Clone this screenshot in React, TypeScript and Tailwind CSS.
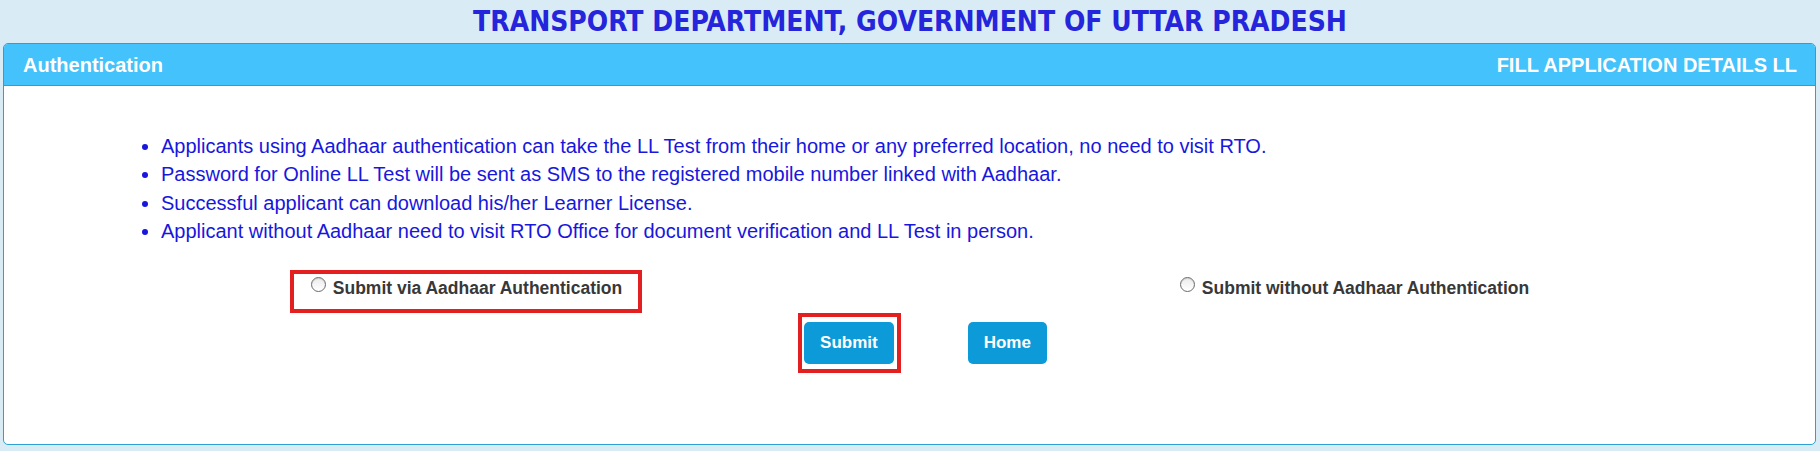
import React from "react";

const items = [
  "Applicants using Aadhaar authentication can take the LL Test from their home or any preferred location, no need to visit RTO.",
  "Password for Online LL Test will be sent as SMS to the registered mobile number linked with Aadhaar.",
  "Successful applicant can download his/her Learner License.",
  "Applicant without Aadhaar need to visit RTO Office for document verification and LL Test in person.",
];

function Radio() {
  return (
    <span className="mt-[-1px] w-[15px] h-[15px] shrink-0 rounded-full border border-[#6a6a6a] bg-gradient-to-b from-[#ececec] to-white shadow-[inset_0_1px_1px_rgba(0,0,0,0.12)]" />
  );
}

export default function App() {
  return (
    <div className="w-[1820px] h-[451px] overflow-hidden bg-[#d9ecf6] font-['Liberation_Sans',Arial,sans-serif]">
      <h1 className="h-[43px] flex items-center justify-center text-[28px] font-bold text-[#2525dc] font-['DejaVu_Sans_Condensed','DejaVu_Sans',sans-serif]">
        TRANSPORT DEPARTMENT, GOVERNMENT OF UTTAR PRADESH
      </h1>
      <div className="ml-[3px] mr-[4px] h-[402px] border border-[#2e9fd2] rounded-[5px] bg-white overflow-hidden">
        <div className="h-[42px] bg-[#43c2fb] border-b border-[#2e9fd2] flex items-center justify-between pl-[19px] pr-[18px] text-white font-bold text-[20px]">
          <span>Authentication</span>
          <span>FILL APPLICATION DETAILS LL</span>
        </div>
        <div className="pl-[18px] pr-[17px]">
          <ul className="mt-[46px] pl-[139px] list-disc text-[20px] leading-[28.4px] text-[#1717de]">
            {items.map((t) => (
              <li key={t}>{t}</li>
            ))}
          </ul>
          <div className="grid grid-cols-2 mt-[24px]">
            <div className="flex justify-center">
              <label className="flex items-start gap-[7px] border-4 border-[#e3201f] pl-[17px] pr-[16px] pt-[4px] pb-[11px] text-[17.5px] leading-[20px] font-bold text-[#383838]">
                <Radio />
                <span>Submit via Aadhaar Authentication</span>
              </label>
            </div>
            <div className="flex justify-center">
              <label className="flex items-start gap-[7px] border-4 border-transparent pl-[17px] pr-[16px] pt-[4px] pb-[11px] text-[17.5px] leading-[20px] font-bold text-[#383838]">
                <Radio />
                <span>Submit without Aadhaar Authentication</span>
              </label>
            </div>
          </div>
          <div className="flex justify-center items-center pl-[25px] gap-[67px]">
            <div className="border-4 border-[#e3201f] pl-[2px] pr-[3px] py-[5px]">
              <button className="h-[42px] px-[16px] rounded-[5px] bg-[#0d9ad8] text-white font-bold text-[17px]">
                Submit
              </button>
            </div>
            <button className="h-[42px] px-[16px] rounded-[5px] bg-[#0d9ad8] text-white font-bold text-[17px]">
              Home
            </button>
          </div>
        </div>
      </div>
    </div>
  );
}
